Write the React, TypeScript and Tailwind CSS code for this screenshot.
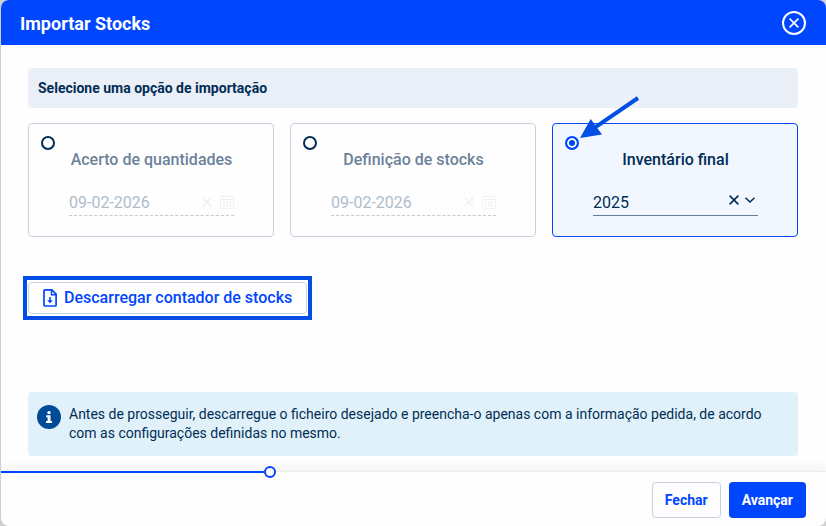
import React, { useState } from "react";
import clsx from "clsx";

const XIcon: React.FC<{ className?: string }> = ({ className }) => (
  <svg viewBox="0 0 10 10" className={className} fill="none" stroke="currentColor" aria-hidden="true">
    <path d="M0.6 0.6 9.4 9.4M9.4 0.6 0.6 9.4" strokeWidth="1.6" />
  </svg>
);

const CalendarIcon: React.FC = () => (
  <svg viewBox="0 0 14 15" className="h-[15px] w-3.5" fill="none" stroke="currentColor" aria-hidden="true">
    <rect x="0.5" y="2.5" width="13" height="12" rx="1" />
    <path d="M3.5 0v2.5M10.5 0v2.5M0.5 5.5h13" />
    <path d="M3 8.5h8M3 11.5h8" strokeWidth="2" strokeDasharray="2 1" />
  </svg>
);

const FileDownloadIcon: React.FC = () => (
  <svg viewBox="0 0 14 18" className="h-[18px] w-3.5" aria-hidden="true">
    <path
      d="M2 0.9h6.8L13.1 5.2V16a1 1 0 0 1-1 1H2a1 1 0 0 1-1-1V1.9a1 1 0 0 1 1-1Z"
      fill="none"
      stroke="currentColor"
      strokeWidth="1.7"
    />
    <path d="M8.5 1v4.7H13" fill="none" stroke="currentColor" strokeWidth="1.5" />
    <path d="M6.2 8h1.6v3.2h2.1L7 14.2 4.1 11.2h2.1Z" fill="currentColor" />
  </svg>
);

const InfoIcon: React.FC = () => (
  <svg viewBox="0 0 24 24" className="size-6 shrink-0" aria-hidden="true">
    <circle cx="12" cy="12" r="12" fill="#004b98" />
    <circle cx="12" cy="7.6" r="1.7" fill="#fff" />
    <path d="M9.2 10.3h4.3v5.6h1.5v2H9v-2h1.6v-3.6H9.2Z" fill="#fff" />
  </svg>
);

const PointerArrow: React.FC = () => (
  <svg
    viewBox="0 0 60 44"
    className="pointer-events-none absolute -top-7 left-[27px] h-11 w-[60px]"
    aria-hidden="true"
  >
    <path d="M58 2 14 32.2" stroke="#004ee6" strokeWidth="4" fill="none" />
    <path d="M0 42 10.7 23 22 38.5Z" fill="#004ee6" />
  </svg>
);

const options = [
  { id: "quantities", label: "Acerto de quantidades" },
  { id: "stocks", label: "Definição de stocks" },
  { id: "inventory", label: "Inventário final" },
];

const App: React.FC = () => {
  const [selected, setSelected] = useState("inventory");
  const [year, setYear] = useState("2025");

  return (
    <div className="min-h-screen bg-[#cfcfd3] pl-px font-['Roboto',sans-serif] text-[#002d55]">
      <div className="flex min-h-screen flex-col overflow-hidden rounded-lg bg-[#fefefe]">
        {/* Header */}
        <header className="flex h-[45px] items-center justify-between bg-[#0046ff] pr-5 pl-[19px] text-white">
          <h1 className="pt-0.5 text-lg font-bold">Importar Stocks</h1>
          <button
            type="button"
            aria-label="Sair"
            className="flex size-6 items-center justify-center rounded-full border-2 border-white"
          >
            <XIcon className="size-2.5" />
          </button>
        </header>

        {/* Body */}
        <main className="flex flex-1 flex-col pt-[23px] pr-7 pb-[15px] pl-[27px]">
          <h2 className="rounded bg-[#ebeff7] px-2.5 py-2.5 text-sm font-bold">
            Selecione uma opção de importação
          </h2>

          <div className="mt-[15px] grid grid-cols-3 gap-4">
            {options.map((option) => {
              const active = selected === option.id;
              return (
                <div
                  key={option.id}
                  className={clsx(
                    "relative flex h-[114px] items-start rounded border px-3 pt-3",
                    active ? "border-[#0046ff] bg-[#f2f7ff]" : "border-[#c8d2de]"
                  )}
                >
                  <input
                    type="radio"
                    name="option"
                    id={option.id}
                    checked={active}
                    onChange={() => setSelected(option.id)}
                    className="size-3.5 shrink-0 appearance-none rounded-full border-2 border-[#002d55] bg-white checked:border-[#0046ff] checked:bg-[#0046ff] checked:shadow-[inset_0_0_0_2px_#fff]"
                  />
                  <div className="flex-1 pt-3 pr-[27px] pl-3.5">
                    <label
                      htmlFor={option.id}
                      className={clsx(
                        "block text-center text-base leading-6 font-medium whitespace-nowrap",
                        !active && "text-[#6c819a]"
                      )}
                    >
                      {option.label}
                    </label>
                    {option.id === "inventory" ? (
                      <div className="mt-4 flex h-7 items-center border-b border-[#667d95]">
                        <select
                          aria-label="Ano"
                          value={year}
                          onChange={(e) => setYear(e.target.value)}
                          className="w-full min-w-0 flex-1 appearance-none bg-transparent pt-0.5 outline-none"
                        >
                          <option value=""></option>
                          <option>2025</option>
                          <option>2024</option>
                        </select>
                        <button type="button" aria-label="Limpar" onClick={() => setYear("")}>
                          <XIcon className="mb-1 size-2.5" />
                        </button>
                        <svg
                          viewBox="0 0 10 6"
                          className="mr-[3px] mb-1 ml-1.5 h-1.5 w-2.5"
                          fill="none"
                          stroke="currentColor"
                          strokeWidth="1.5"
                          aria-hidden="true"
                        >
                          <path d="M0.5 0.7 5 5 9.5 0.7" />
                        </svg>
                      </div>
                    ) : (
                      <div className="mt-4 flex h-7 items-center border-b border-dashed border-[#c6c8cb] text-[#eff1f5]">
                        <input
                          type="text"
                          aria-label="Data"
                          disabled
                          defaultValue="09-02-2026"
                          className="w-full min-w-0 flex-1 bg-transparent pt-0.5 text-[#afbccb]"
                        />
                        <XIcon className="size-2.5" />
                        <span className="ml-2">
                          <CalendarIcon />
                        </span>
                      </div>
                    )}
                  </div>
                  {option.id === "inventory" && <PointerArrow />}
                </div>
              );
            })}
          </div>

          {/* Highlighted download */}
          <div className="mt-[39px] -ml-[5px] self-start border-4 border-[#004ee6] bg-white py-0.5 pr-px pl-px">
            <button
              type="button"
              className="flex h-8 items-center gap-[7px] rounded border border-[#c8d2de] px-3.5 font-medium text-[#0046ff]"
            >
              <FileDownloadIcon />
              Descarregar contador de stocks
            </button>
          </div>

          <div className="mt-auto flex gap-2 rounded bg-[#e0f1fa] px-[9px] py-[13px] text-sm leading-[19px]">
            <InfoIcon />
            <p>
              Antes de prosseguir, descarregue o ficheiro desejado e preencha-o apenas com a informação
              pedida, de acordo com as configurações definidas no mesmo.
            </p>
          </div>
        </main>

        {/* Step progress and actions */}
        <footer className="relative border-t border-[#ececec] shadow-[0_-4px_10px_rgba(0,0,0,0.05)]">
          <div className="absolute -top-1.5 left-0 flex w-1/3 items-center">
            <div className="h-0.5 flex-1 bg-[#0046ff]" />
            <div className="size-3 rounded-full border-2 border-[#0046ff] bg-white" />
          </div>
          <div className="flex justify-end gap-2 px-5 pt-2.5 pb-2 text-sm font-bold">
            <button type="button" className="h-9 rounded border border-[#c8d2de] px-3 text-[#0046ff]">
              Fechar
            </button>
            <button type="button" className="h-9 rounded bg-[#0046ff] px-[13px] text-white">
              Avançar
            </button>
          </div>
        </footer>
      </div>
    </div>
  );
};

export default App;
